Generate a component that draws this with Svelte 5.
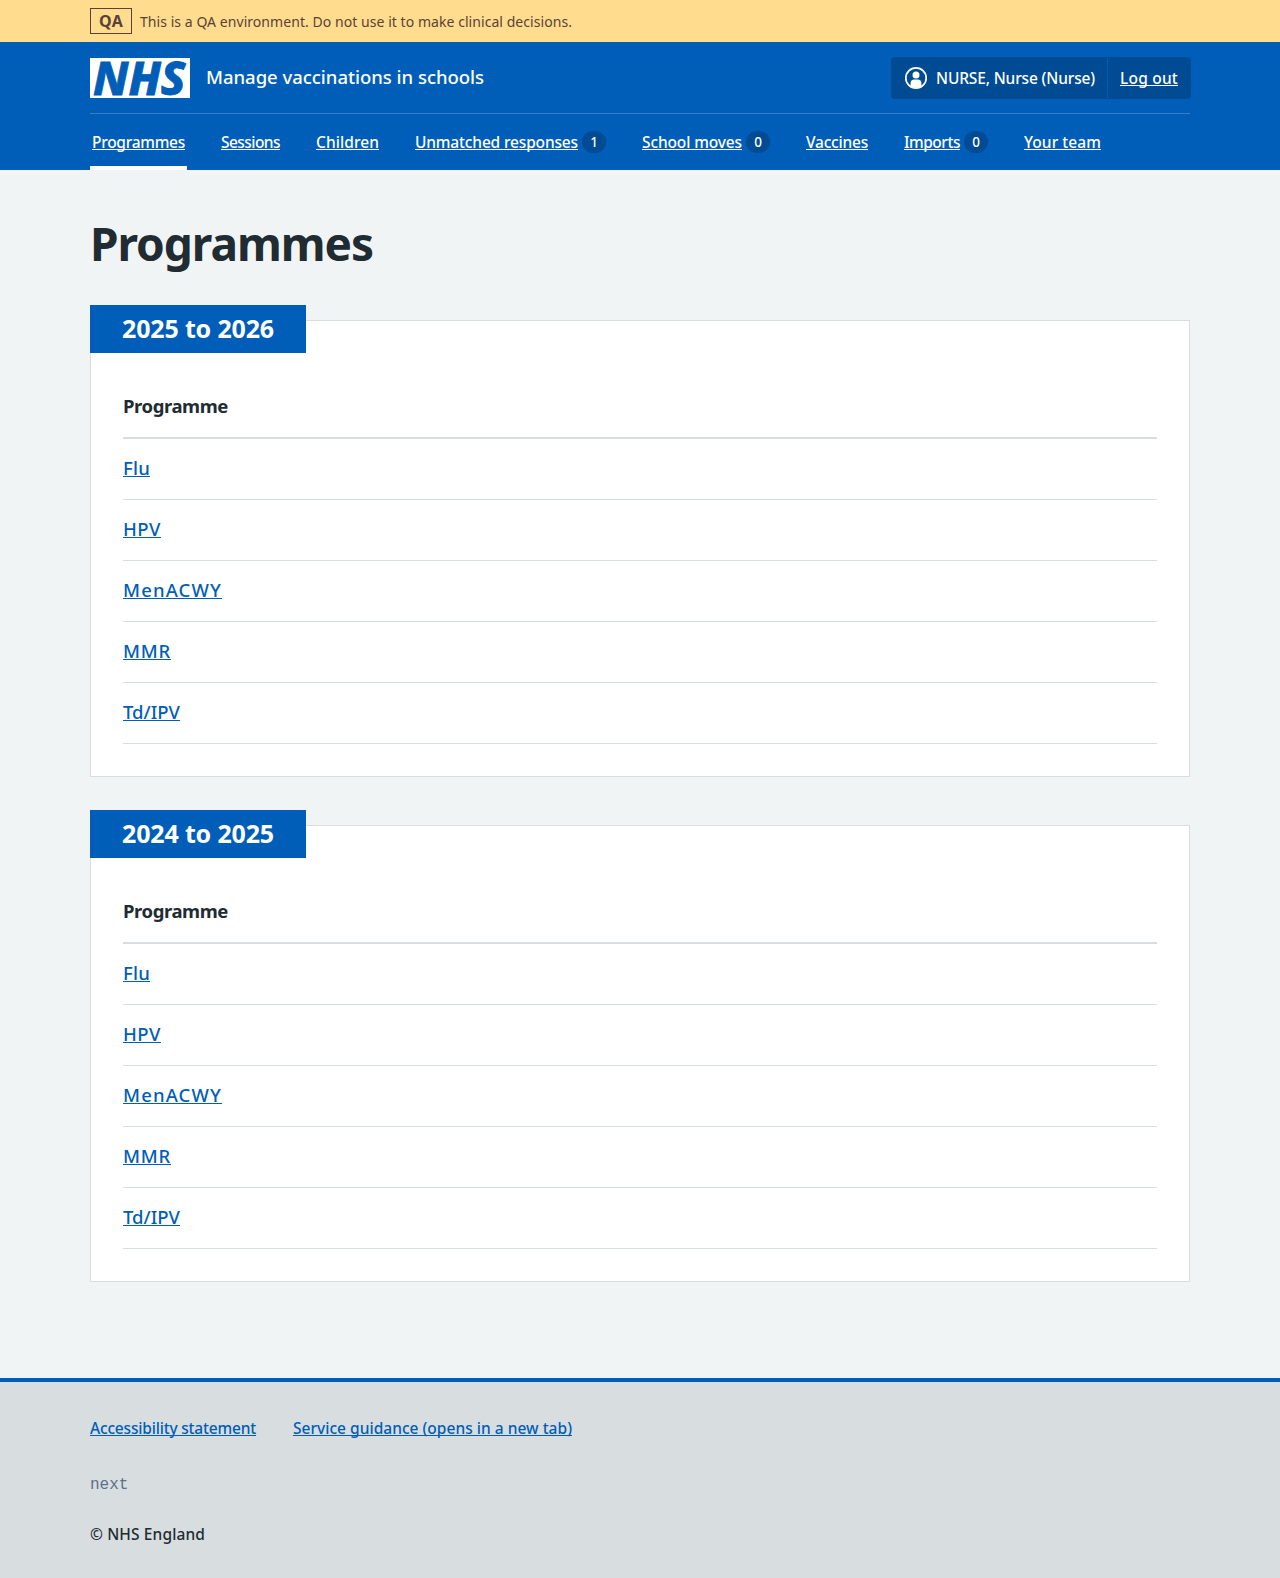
<script>
  const nav = [
    { label: 'Programmes', width: 93, current: true },
    { label: 'Sessions', width: 59 },
    { label: 'Children', width: 63 },
    { label: 'Unmatched responses', width: 163, count: 1 },
    { label: 'School moves', width: 100, count: 0 },
    { label: 'Vaccines', width: 62 },
    { label: 'Imports', width: 56, count: 0 },
    { label: 'Your team', width: 77 }
  ];
  const programmes = [
    { name: 'Flu', width: 27 },
    { name: 'HPV', width: 38 },
    { name: 'MenACWY', width: 99 },
    { name: 'MMR', width: 48 },
    { name: 'Td/IPV', width: 57 }
  ];
  const years = ['2025 to 2026', '2024 to 2025'];

  // Adjusts tracking so that a label fills the given measure.
  function fit(node, width) {
    const apply = () => {
      node.style.letterSpacing = '0px';
      const natural = node.getBoundingClientRect().width;
      node.style.letterSpacing = `${(width - natural) / node.textContent.length}px`;
    };
    apply();
    document.fonts?.ready.then(apply);
  }
</script>

<div class="banner">
  <div class="container banner-row">
    <strong class="tag"><span use:fit={24}>QA</span></strong>
    <span class="banner-text" use:fit={432}>This is a QA environment. Do not use it to make clinical decisions.</span>
  </div>
</div>

<header>
  <div class="container">
    <div class="masthead">
      <svg class="logo" width="100" height="40" viewBox="0 0 100 40" role="img" aria-label="NHS">
        <rect width="100" height="40" fill="#fff" />
        <text x="3" y="36.600" textLength="92.500" lengthAdjust="spacingAndGlyphs">NHS</text>
      </svg>
      <span class="service" use:fit={278}>Manage vaccinations in schools</span>
      <div class="account">
        <div class="user">
          <svg width="24" height="24" viewBox="0 0 24 24" aria-hidden="true">
            <circle cx="12" cy="12" r="10.200" fill="none" stroke="#fff" stroke-width="1.700" />
            <circle cx="12" cy="9" r="3.500" fill="#fff" />
            <path d="M6.600 20v-3c0-2.400 1.300-3.600 3.600-3.600h3.600c2.300 0 3.600 1.200 3.600 3.600V20c-3 2.300-7.800 2.300-10.800 0z" fill="#fff" />
          </svg>
          <span use:fit={159}>NURSE, Nurse (Nurse)</span>
        </div>
        <div class="logout"><a href="#logout" use:fit={58}>Log out</a></div>
      </div>
    </div>
    <nav>
      {#each nav as item}
        <div class="nav-item" class:current={item.current}>
          <a href="#nav" use:fit={item.width}>{item.label}</a>
          {#if item.count !== undefined}<span class="count">{item.count}</span>{/if}
        </div>
      {/each}
    </nav>
  </div>
</header>

<main class="container">
  <h1><span use:fit={283}>Programmes</span></h1>
  {#each years as year}
    <section>
      <h2><span use:fit={152}>{year}</span></h2>
      <div class="card">
        <div class="head"><span use:fit={105}>Programme</span></div>
        {#each programmes as p}
          <div class="row"><a href="#programme" use:fit={p.width}>{p.name}</a></div>
        {/each}
      </div>
    </section>
  {/each}
</main>

<footer>
  <div class="container">
    <div class="links">
      <a href="#accessibility" use:fit={166}>Accessibility statement</a>
      <a href="#guidance" use:fit={279}>Service guidance (opens in a new tab)</a>
    </div>
    <div class="version">next</div>
    <div class="copyright"><span use:fit={115}>© NHS England</span></div>
  </div>
</footer>

<style>
  :global(body) {
    margin: 0;
    background: #f0f4f5;
    color: #212b32;
    font: 500 15.5px/24px 'Noto Sans', 'Open Sans', sans-serif;
  }
  .container {
    width: 1100px;
    margin: 0 auto;
  }
  a {
    text-decoration: underline;
    text-decoration-thickness: 1px;
    text-underline-offset: 1px;
    text-decoration-skip-ink: none;
  }
  a, span {
    white-space: nowrap;
  }
  .banner {
    background: #ffdc8e;
    color: #5a4238;
  }
  .banner-row {
    display: flex;
    align-items: center;
    gap: 8px;
    height: 42px;
  }
  .tag {
    box-sizing: border-box;
    width: 42px;
    height: 26px;
    border: 1px solid #5a4238;
    font-size: 16px;
    text-align: center;
    line-height: 25px;
  }
  .banner-text {
    padding-top: 2px;
    font-size: 14px;
    font-weight: 400;
  }
  header {
    height: 128px;
    background: #005eb8;
    color: #fff;
  }
  .masthead {
    display: flex;
    align-items: center;
    height: 71px;
    border-bottom: 1px solid #337ec6;
  }
  .logo {
    display: block;
    flex: none;
    overflow: visible;
  }
  .logo text {
    font: italic 800 46px/1 'Noto Sans', 'Open Sans', sans-serif;
    fill: #005eb8;
    stroke: #005eb8;
    stroke-width: 0.8px;
  }
  .service {
    margin-left: 16px;
    padding-bottom: 2px;
    font-size: 18.5px;
  }
  .account {
    display: flex;
    align-items: center;
    width: 300px;
    height: 42px;
    margin: 1px -1px 0 auto;
    border-radius: 4px;
    background: #004b93;
  }
  .user {
    display: flex;
    align-items: center;
    gap: 8px;
    box-sizing: border-box;
    width: 217px;
    height: 40px;
    padding-left: 13px;
    border-right: 1px solid #005eb8;
  }
  .logout {
    padding-left: 12px;
  }
  header a {
    color: #fff;
  }
  nav {
    display: flex;
    gap: 32px;
    height: 56px;
  }
  .nav-item {
    display: flex;
    align-items: center;
    gap: 4px;
    box-sizing: border-box;
    padding: 0 2px;
    border-top: 4px solid transparent;
    border-bottom: 4px solid transparent;
  }
  .nav-item.current {
    border-bottom-color: #fff;
  }
  .count {
    width: 24px;
    height: 22px;
    border-radius: 12px;
    background: #004b93;
    font-size: 13.5px;
    line-height: 23px;
    text-align: center;
  }
  h1, h2 {
    margin: 0;
  }
  main {
    height: 1208px;
  }
  h1 {
    padding: 45px 0 1px;
    font-size: 46px;
    line-height: 56px;
  }
  section {
    margin-top: 33px;
  }
  h2 {
    position: relative;
    box-sizing: border-box;
    width: 216px;
    height: 48px;
    margin-bottom: -33px;
    padding-left: 32px;
    background: #005eb8;
    color: #fff;
    font-size: 25px;
    line-height: 47px;
  }
  .card {
    box-sizing: border-box;
    height: 457px;
    padding: 63px 32px 0;
    border: 1px solid #d8dde0;
    background: #fff;
    font-size: 18.5px;
  }
  .head {
    height: 53px;
    border-bottom: 2px solid #d8dde0;
    font-weight: 700;
    line-height: 43px;
  }
  .row {
    height: 60px;
    border-bottom: 1px solid #d8dde0;
    line-height: 58px;
  }
  .row a, footer a {
    color: #005eb8;
  }
  footer {
    box-sizing: border-box;
    height: 200px;
    padding-top: 34px;
    border-top: 4px solid #005eb8;
    background: #d8dde0;
  }
  .links {
    display: flex;
    gap: 37px;
  }
  .version {
    margin-top: 33px;
    color: #5c7088;
    font: 400 16px/24px 'Liberation Mono', monospace;
  }
  .copyright {
    margin-top: 25px;
  }
</style>
